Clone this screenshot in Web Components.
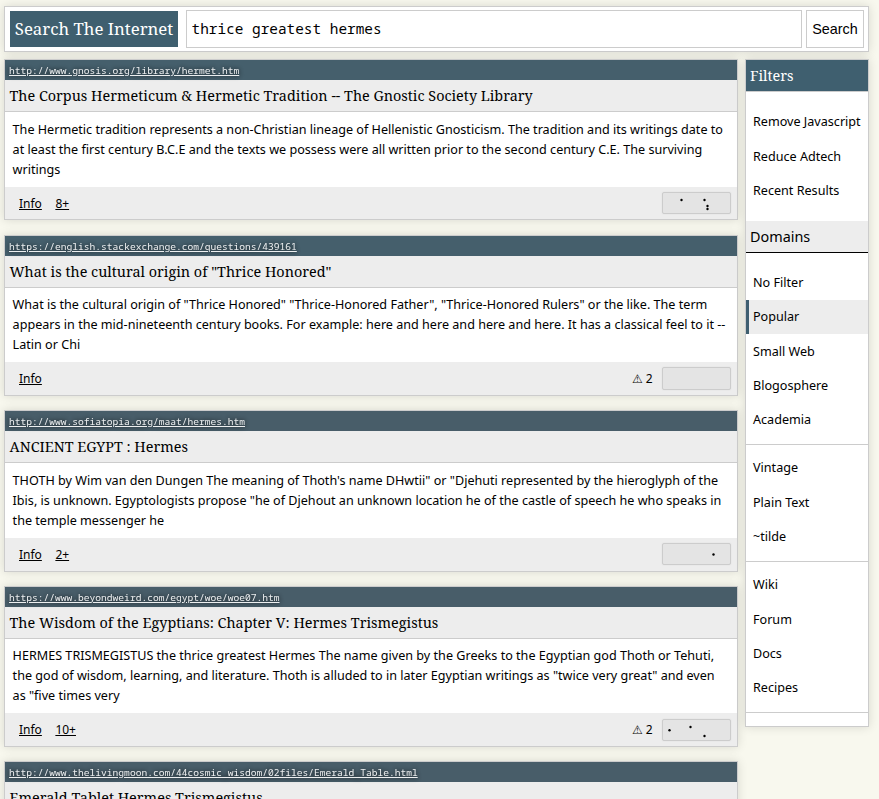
<!DOCTYPE html>
<html lang="en"><head><meta charset="utf-8"><title>Search The Internet</title>
<style>
html,body{margin:0;height:799px;overflow:hidden;background:#f8f8ee}
body{font-family:"Noto Sans",sans-serif;color:#000}
</style></head><body><search-page></search-page>
<script>
const define=(name,html,setup)=>{
  const t=document.createElement('template');t.innerHTML=html;
  customElements.define(name,class extends HTMLElement{
    constructor(){super();this.attachShadow({mode:'open'}).append(t.content.cloneNode(true));}
    connectedCallback(){if(setup)setup(this,this.shadowRoot);}
  });
};
define('search-bar',`<style>
:host{display:flex;box-sizing:border-box;height:46px;padding:3px 4px 3px 5px;border:1px solid #ccc;background:#fff;box-shadow:0 0 9.6px #0002;align-items:center}
h1{margin:0 8px 0 0;box-sizing:border-box;width:168px;height:36px;background:#3f5f6f;color:#fff;font:16.8px/36px "Noto Serif","DejaVu Serif",serif;text-align:center;white-space:nowrap}
input{flex:1;min-width:0;box-sizing:border-box;height:38px;border:1px solid #ccc;padding:0 4.6px 2px;font:14.4px "Noto Sans Mono","DejaVu Sans Mono",monospace;color:#000;outline:0;background:#fff;border-radius:0}
button{margin-left:4px;box-sizing:border-box;width:58px;height:38px;padding:0;border:1px solid #ccc;background:#fff;font:14.4px "Liberation Sans",sans-serif;color:#000}
</style><h1>Search The Internet</h1><input value="thrice greatest hermes" spellcheck="false"><button>Search</button>`);

define('position-dots',`<style>
:host{display:block;box-sizing:border-box;width:69px;height:22.4px;border:1px solid #ccc;border-radius:2px;background:#e4e4e4;box-shadow:0 0 2px #0001}
svg{display:block}</style><svg width="67" height="20"></svg>`,(el,r)=>{
  const svg=r.querySelector('svg');
  (el.getAttribute('points')||'').split(' ').filter(Boolean).forEach(p=>{
    const [x,y]=p.split(',');
    const c=document.createElementNS('http://www.w3.org/2000/svg','circle');
    c.setAttribute('cx',x);c.setAttribute('cy',y);c.setAttribute('r','1.2');svg.append(c);
  });
});

define('search-result',`<style>
:host{display:flex;flex-direction:column;box-sizing:border-box;height:161.25px;border:1px solid #ccc;background:#fff;box-shadow:0 0 9.6px #0002;flex:none}
.url{height:20px;box-sizing:border-box;padding:0 4px;background:var(--bar,#455f6c);font:9.6px/21px "Noto Sans Mono","DejaVu Sans Mono",monospace;white-space:nowrap}
.url a{color:#fff;opacity:.9;text-decoration:underline;text-shadow:0 0 4.8px #000}
h2{margin:0;height:32px;box-sizing:border-box;padding:0 4.5px;border-bottom:1px solid #ccc;background:#ededed;font:14.4px/31px "Noto Serif","DejaVu Serif",serif;white-space:nowrap}
p{margin:0;height:74.5px;box-sizing:border-box;padding:7.5px 7.6px 0;font-size:12.6px;line-height:20px;white-space:nowrap}
::slotted(span){display:block}
footer{flex:1;display:flex;align-items:center;background:#ededed;padding:0 6px 0 14px;font-size:12px}
.links{display:flex;gap:13.5px;flex:1}.links a{color:#000;text-decoration:underline}
.warn{margin-right:9.4px}
</style><div class="url"><a></a></div><h2></h2><p><slot></slot></p><footer><div class="links"><a>Info</a></div><position-dots></position-dots></footer>`,(el,r)=>{
  r.querySelector('.url a').textContent=el.getAttribute('url');
  r.querySelector('h2').textContent=el.getAttribute('heading');
  const d=r.querySelector('position-dots');
  if(el.hasAttribute('more')){const a=document.createElement('a');a.textContent=el.getAttribute('more');r.querySelector('.links').append(a);}
  if(el.hasAttribute('warn')){const s=document.createElement('span');s.className='warn';s.textContent='⚠ '+el.getAttribute('warn');d.before(s);}
  const n=document.createElement('position-dots');n.setAttribute('points',el.getAttribute('points')||'');d.replaceWith(n);
});

define('filter-item',`<style>
:host{display:flex;align-items:center;box-sizing:border-box;height:34.3px;padding-left:4px;border-left:3px solid transparent;font-size:12.6px;white-space:nowrap}
:host([current]){background:#ededed;border-color:#3f5f6f}
</style><slot></slot>`);

define('filter-panel',`<style>
:host{display:block;box-sizing:border-box;height:667.8px;border:1px solid #ccc;background:#fff;box-shadow:0 0 9.6px #0002}
h2,h3{margin:0;box-sizing:border-box;height:32px;padding-left:4px;font-weight:400;line-height:31px}
h2{font:14.4px/31px "Noto Serif","DejaVu Serif",serif;color:#fff;background:#3f5f6f;border-bottom:1px solid #ccc}
h3{font-size:14.4px;background:#ededed;border-bottom:1px solid #000}
.group{padding:12.6px 0}.group+.group,.end{border-top:1px solid #ccc}
.domains .group{padding:5.9px 0 7.1px}.domains .group:first-of-type{padding-top:12.1px}
</style><h2>Filters</h2>
<div class="group" style="padding-bottom:13.5px"><filter-item>Remove Javascript</filter-item><filter-item>Reduce Adtech</filter-item><filter-item>Recent Results</filter-item></div>
<section class="domains"><h3>Domains</h3>
<div class="group"><filter-item>No Filter</filter-item><filter-item current>Popular</filter-item><filter-item>Small Web</filter-item><filter-item>Blogosphere</filter-item><filter-item>Academia</filter-item></div>
<div class="group"><filter-item>Vintage</filter-item><filter-item>Plain Text</filter-item><filter-item>~tilde</filter-item></div>
<div class="group"><filter-item>Wiki</filter-item><filter-item>Forum</filter-item><filter-item>Docs</filter-item><filter-item>Recipes</filter-item></div>
<div class="end"></div></section>`);

define('search-page',`<style>
:host{display:block;box-sizing:border-box;height:799px;overflow:hidden;padding:6px 10px 0 4px}
main{display:grid;grid-template-columns:734px 124px;gap:7px;margin-top:7.2px;align-items:start}
.results{display:flex;flex-direction:column;gap:14.3px}
</style><search-bar></search-bar><main><div class="results">
<search-result url="http://www.gnosis.org/library/hermet.htm" heading="The Corpus Hermeticum &amp; Hermetic Tradition -- The Gnostic Society Library" more="8+" points="18.5,7 41.5,7 44.5,13 44.5,16"><span>The Hermetic tradition represents a non-Christian lineage of Hellenistic Gnosticism. The tradition and its writings date to</span><span>at least the first century B.C.E and the texts we possess were all written prior to the second century C.E. The surviving</span><span>writings</span></search-result>
<search-result url="https://english.stackexchange.com/questions/439161" heading='What is the cultural origin of "Thrice Honored"' warn="2" style="--bar:#455f6c"><span>What is the cultural origin of "Thrice Honored" "Thrice-Honored Father", "Thrice-Honored Rulers" or the like. The term</span><span>appears in the mid-nineteenth century books. For example: here and here and here and here. It has a classical feel to it --</span><span>Latin or Chi</span></search-result>
<search-result url="http://www.sofiatopia.org/maat/hermes.htm" heading="ANCIENT EGYPT : Hermes" more="2+" points="50.5,10.5" style="--bar:#485d69"><span>THOTH by Wim van den Dungen The meaning of Thoth's name DHwtii" or "Djehuti represented by the hieroglyph of the</span><span>Ibis, is unknown. Egyptologists propose "he of Djehout an unknown location he of the castle of speech he who speaks in</span><span>the temple messenger he</span></search-result>
<search-result url="https://www.beyondweird.com/egypt/woe/woe07.htm" heading="The Wisdom of the Egyptians: Chapter V: Hermes Trismegistus" more="10+" warn="2" points="6.5,10.3 27.5,7 41.5,16" style="--bar:#485d69"><span>HERMES TRISMEGISTUS the thrice greatest Hermes The name given by the Greeks to the Egyptian god Thoth or Tehuti,</span><span>the god of wisdom, learning, and literature. Thoth is alluded to in later Egyptian writings as "twice very great" and even</span><span>as "five times very</span></search-result>
<search-result url="http://www.thelivingmoon.com/44cosmic_wisdom/02files/Emerald_Table.html" heading="Emerald Tablet Hermes Trismegistus" style="--bar:#485d69"></search-result>
</div><filter-panel></filter-panel></main>`);
</script></body></html>
